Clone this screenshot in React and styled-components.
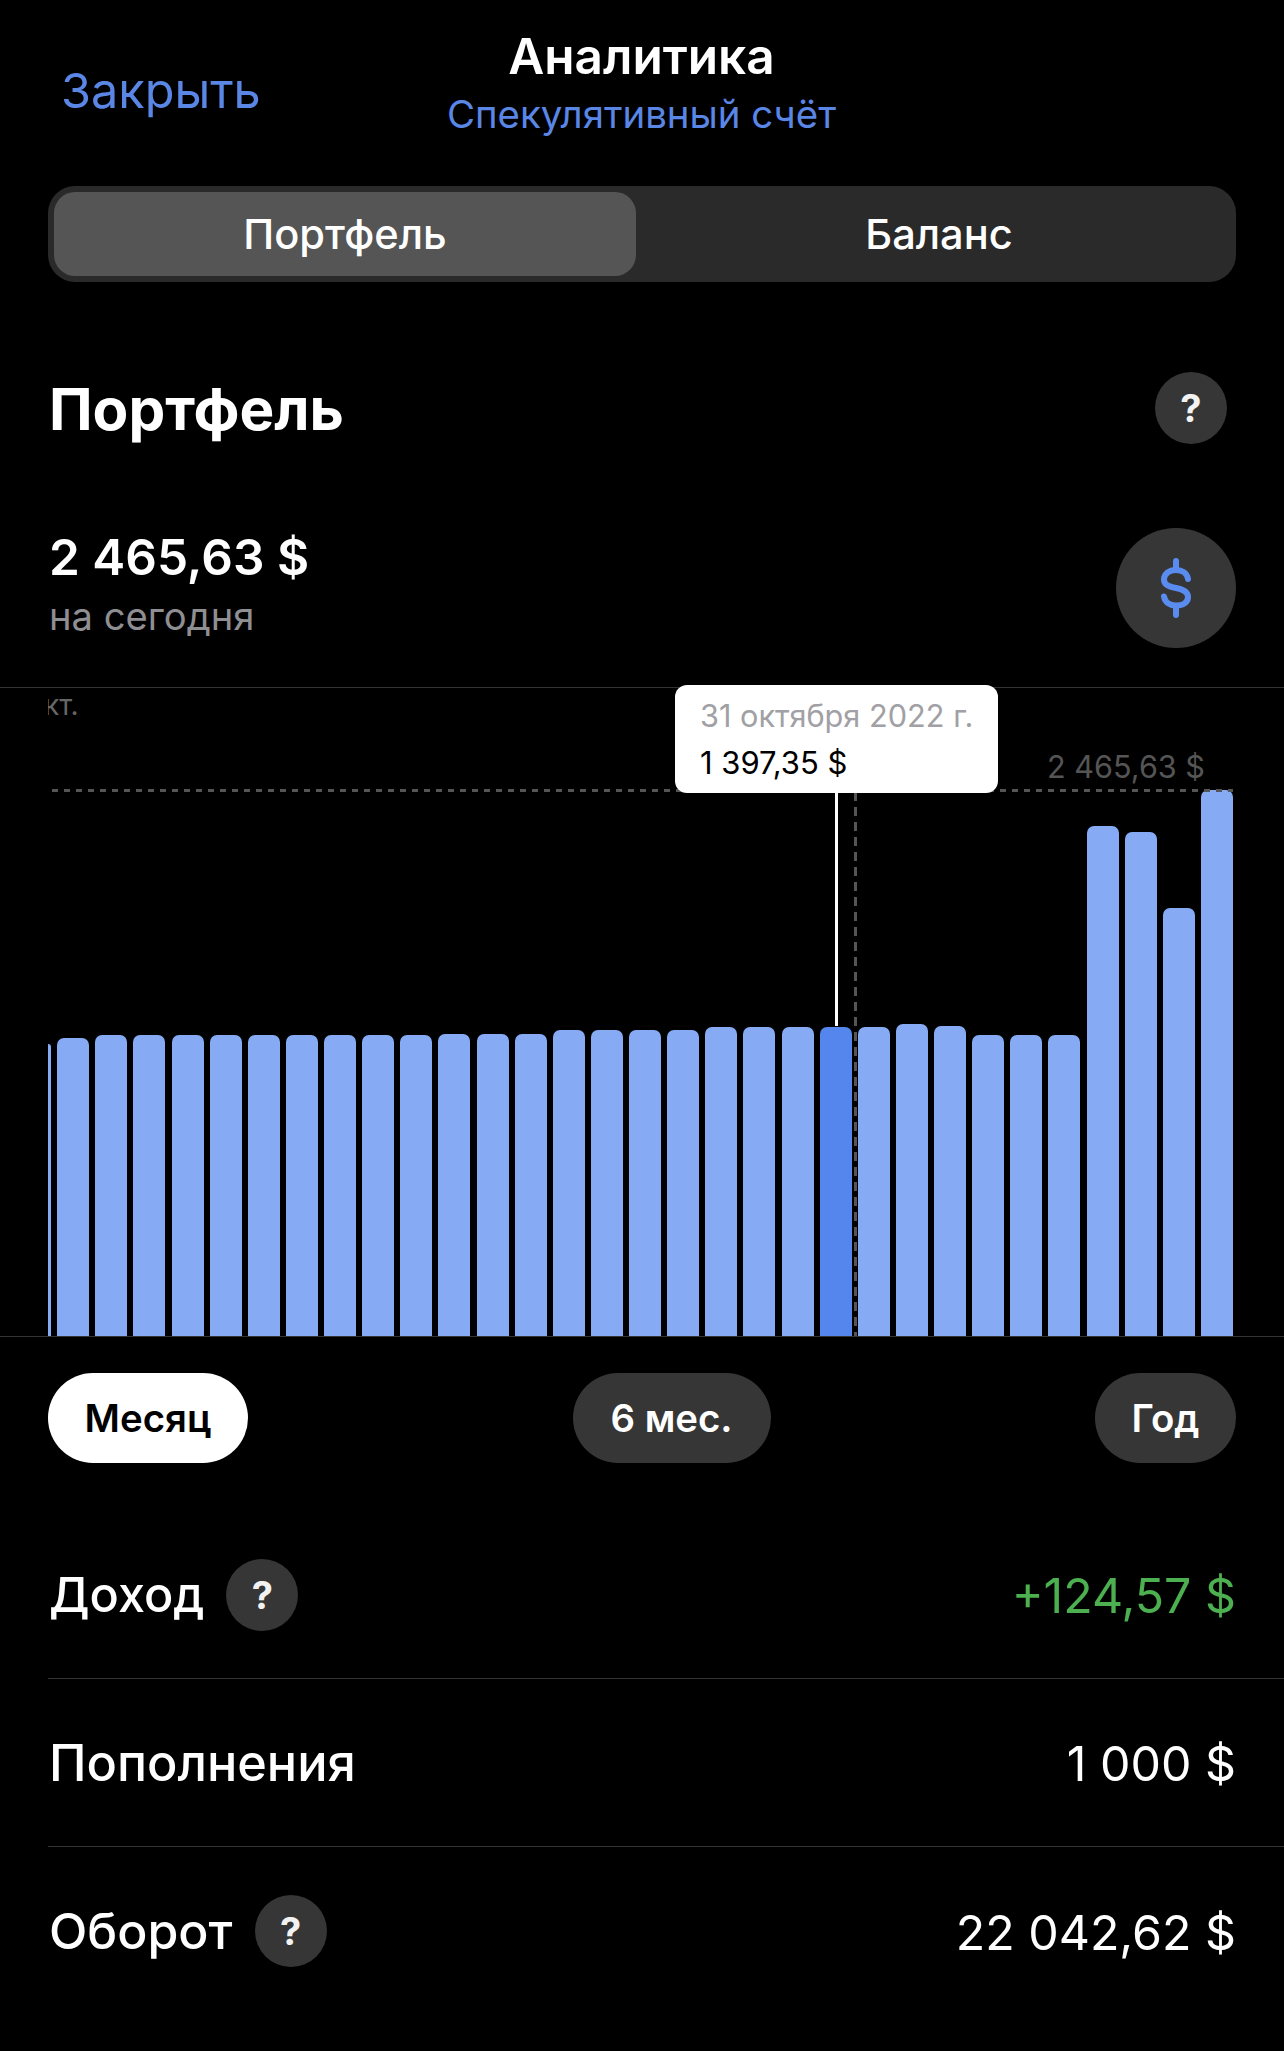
import React from 'react'
import styled, {createGlobalStyle} from 'styled-components'

const GlobalStyle = createGlobalStyle`
  html, body {
    margin: 0;
    padding: 0;
    background: #000;
  }
  * {
    box-sizing: border-box;
  }
`

const Page = styled.div`
  width: 1284px;
  height: 2051px;
  background: #000;
  color: #fff;
  font-family: Inter, "Noto Sans", sans-serif;
  overflow: hidden;
`

const Header = styled.header`
  display: grid;
  grid-template-columns: 1fr auto 1fr;
  height: 186px;
  padding: 0 62px 0 61px;
`

const CloseLink = styled.div`
  font-size: 48.6px;
  line-height: 60px;
  color: #5a86e6;
  margin-top: 61px;
`

const TitleBlock = styled.div`
  display: flex;
  flex-direction: column;
  align-items: center;
  padding-top: 26px;
`

const Title = styled.div`
  font-size: 49.5px;
  line-height: 60px;
  font-weight: 600;
`

const Subtitle = styled.div`
  font-size: 38.4px;
  line-height: 46px;
  margin-top: 5px;
  color: #5a86e6;
`

const Segmented = styled.div`
  display: grid;
  grid-template-columns: 582px 1fr;
  height: 96px;
  margin: 0 48px;
  padding: 6px;
  background: #2a2a2a;
  border-radius: 27px;
`

const Segment = styled.div`
  display: flex;
  align-items: center;
  justify-content: center;
  font-size: 41.6px;
  font-weight: 500;
  border-radius: 21px;
  background: ${p => (p.$active ? '#555555' : 'transparent')};
  padding-left: ${p => (p.$active ? 0 : 12)}px;
`

const SectionHead = styled.div`
  display: flex;
  align-items: center;
  justify-content: space-between;
  height: 72px;
  margin: 90px 57px 0 49px;
`

const SectionTitle = styled.h2`
  margin: 0;
  font-size: 58.4px;
  font-weight: 700;
`

const HelpButton = styled.div`
  flex: none;
  display: flex;
  align-items: center;
  justify-content: center;
  width: 72px;
  height: 72px;
  border-radius: 50%;
  background: #363636;
  color: #f2f2f2;
  font-size: 38px;
  font-weight: 700;
`

const ValueRow = styled.div`
  display: flex;
  align-items: center;
  justify-content: space-between;
  height: 120px;
  margin: 84px 48px 39px 49px;
`

const ValueText = styled.div`
  display: flex;
  flex-direction: column;
  gap: 6px;
  margin-top: -10px;
`

const Amount = styled.div`
  font-size: 49.5px;
  line-height: 60px;
  font-weight: 600;
`

const AmountHint = styled.div`
  font-size: 38.2px;
  line-height: 46px;
  color: #8e8e93;
`

const CurrencyButton = styled.div`
  display: flex;
  align-items: center;
  justify-content: center;
  width: 120px;
  height: 120px;
  border-radius: 50%;
  background: #363636;
`

const Chart = styled.section`
  position: relative;
  height: 650px;
  border-top: 1px solid #333;
  border-bottom: 1px solid #333;
  overflow: visible;
`

const Bars = styled.div`
  display: flex;
  align-items: flex-end;
  gap: 6.13px;
  height: 100%;
  padding-left: 48px;
`

const Bar = styled.div`
  flex: none;
  width: ${p => (p.$clipped ? 3 : 32)}px;
  border-radius: ${p => (p.$clipped ? '0 6px 0 0' : '7px 7px 0 0')};
  background: ${p => (p.$active ? '#5486ee' : '#86aaf3')};
`

// the month name runs off the left side of the chart, only its tail shows
const AxisLabel = styled.div`
  position: absolute;
  top: 0;
  left: 48px;
  width: 40px;
  overflow: hidden;
  text-indent: -4px;
  font-size: 28px;
  line-height: 34px;
  color: #666;
  white-space: nowrap;
`

const MaxLine = styled.div`
  position: absolute;
  top: 101px;
  left: 52px;
  right: 51px;
  height: 3px;
  background: repeating-linear-gradient(to right, #555 0 6px, transparent 6px 12px);
`

const MaxLabel = styled.div`
  position: absolute;
  top: 61px;
  right: 79px;
  font-size: 30.6px;
  line-height: 36px;
  color: #555;
`

const CursorLine = styled.div`
  position: absolute;
  top: 104px;
  bottom: 0;
  left: 854px;
  width: 3px;
  background: repeating-linear-gradient(to bottom, #555 0 9px, transparent 9px 15px);
`

const SelectedLine = styled.div`
  position: absolute;
  top: 100px;
  left: 835px;
  width: 3px;
  height: 238px;
  background: #fff;
`

const Tooltip = styled.div`
  position: absolute;
  top: -3px;
  left: 675px;
  width: 323px;
  height: 108px;
  padding: 11px 25px;
  background: #fff;
  border-radius: 12px;
`

const TooltipDate = styled.div`
  font-size: 30.7px;
  line-height: 40px;
  color: #a0a0a5;
  white-space: nowrap;
`

const TooltipValue = styled.div`
  font-size: 31px;
  line-height: 40px;
  margin-top: 7px;
  color: #000;
`

const Periods = styled.div`
  display: flex;
  justify-content: space-between;
  margin: 36px 48px 48px 48px;
`

const Period = styled.div`
  display: flex;
  align-items: center;
  justify-content: center;
  width: ${p => p.$width}px;
  height: 90px;
  border-radius: 45px;
  font-size: 38.4px;
  font-weight: 600;
  background: ${p => (p.$active ? '#fff' : '#363636')};
  color: ${p => (p.$active ? '#000' : '#fff')};
`

const StatRow = styled.div`
  display: flex;
  align-items: center;
  justify-content: space-between;
  height: 168px;
  margin-left: 48px;
  padding: 0 48px 0 1px;
  border-bottom: ${p => (p.$last ? 'none' : '1px solid #333')};
`

const StatLabel = styled.div`
  display: flex;
  align-items: center;
  gap: 22px;
  font-size: ${p => p.$size || 50}px;
  font-weight: 500;
`

const StatValue = styled.div`
  font-size: 48.3px;
  padding-top: 2px;
  color: ${p => (p.$positive ? '#4caf50' : '#fff')};
`

const barTops = [
  1038, 1035, 1035, 1035, 1035, 1035, 1035, 1035, 1035, 1035, 1034, 1034, 1034, 1030, 1030, 1030,
  1030, 1027, 1027, 1027, 1027, 1027, 1024, 1026, 1035, 1035, 1035, 826, 832, 908, 790
]
const chartBottom = 1336
const selectedBar = 20

function DollarIcon() {
  return (
    <svg width="36" height="66" viewBox="0 0 36 66" fill="none" stroke="#5a8cf0" strokeWidth="6" strokeLinecap="round">
      <path d="M18 6v9M18 51v9" />
      <path d="M30 24c-1-6-6-9-12-9-7 0-12 4-12 9.500 0 5 4 7 12 8.500s12 4 12 9c0 5.500-5 8.500-12 8.500-6 0-11-3-12-9" />
    </svg>
  )
}

export default function App() {
  return (
    <Page>
      <GlobalStyle />
      <Header>
        <CloseLink>Закрыть</CloseLink>
        <TitleBlock>
          <Title>Аналитика</Title>
          <Subtitle>Спекулятивный счёт</Subtitle>
        </TitleBlock>
      </Header>

      <Segmented>
        <Segment $active>Портфель</Segment>
        <Segment>Баланс</Segment>
      </Segmented>

      <SectionHead>
        <SectionTitle>Портфель</SectionTitle>
        <HelpButton>?</HelpButton>
      </SectionHead>

      <ValueRow>
        <ValueText>
          <Amount>2 465,63 $</Amount>
          <AmountHint>на сегодня</AmountHint>
        </ValueText>
        <CurrencyButton>
          <DollarIcon />
        </CurrencyButton>
      </ValueRow>

      <Chart>
        <Bars>
          <Bar $clipped style={{height: chartBottom - 1044}} />
          {barTops.map((top, i) => (
            <Bar key={i} $active={i === selectedBar} style={{height: chartBottom - top}} />
          ))}
        </Bars>
        <AxisLabel>кт.</AxisLabel>
        <MaxLine />
        <MaxLabel>2 465,63 $</MaxLabel>
        <CursorLine />
        <SelectedLine />
        <Tooltip>
          <TooltipDate>31 октября 2022 г.</TooltipDate>
          <TooltipValue>1 397,35 $</TooltipValue>
        </Tooltip>
      </Chart>

      <Periods>
        <Period $active $width={200}>Месяц</Period>
        <Period $width={198}>6 мес.</Period>
        <Period $width={141}>Год</Period>
      </Periods>

      <StatRow>
        <StatLabel $size={48.6}>
          Доход
          <HelpButton>?</HelpButton>
        </StatLabel>
        <StatValue $positive>+124,57 $</StatValue>
      </StatRow>
      <StatRow>
        <StatLabel $size={50.4}>Пополнения</StatLabel>
        <StatValue>1 000 $</StatValue>
      </StatRow>
      <StatRow $last>
        <StatLabel>
          Оборот
          <HelpButton>?</HelpButton>
        </StatLabel>
        <StatValue>22 042,62 $</StatValue>
      </StatRow>
    </Page>
  )
}
